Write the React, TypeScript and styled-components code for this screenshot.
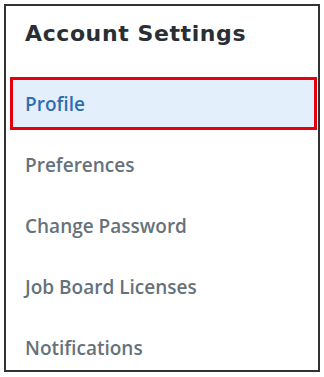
import React from "react";
import styled, { createGlobalStyle, css } from "styled-components";

const GlobalStyle = createGlobalStyle`
  html, body {
    margin: 0;
    padding: 0;
    background: #ffffff;
  }
`;

const Frame = styled.div`
  padding: 4px;
`;

const Panel = styled.aside`
  box-sizing: border-box;
  width: 316px;
  height: 368px;
  border: 2px solid #333333;
  background: #ffffff;
  overflow: hidden;
`;

const Title = styled.h2`
  box-sizing: border-box;
  height: 67px;
  margin: 0;
  padding: 15px 0 0 19px;
  font-family: "DejaVu Sans", "Open Sans", sans-serif;
  font-size: 22px;
  line-height: 26px;
  letter-spacing: 0.6px;
  font-weight: 700;
  color: #2a2f33;
`;

const NavList = styled.nav`
  display: flex;
  flex-direction: column;
  padding: 0 1px 0 4px;
`;

const NavItem = styled.a<{ active?: boolean }>`
  box-sizing: border-box;
  display: flex;
  align-items: center;
  height: 53px;
  margin: 4px 0;
  padding-left: 12px;
  border: 3px solid transparent;
  font-family: "Open Sans", "Noto Sans", sans-serif;
  font-size: 19px;
  font-weight: 600;
  color: #66727b;
  text-decoration: none;
  cursor: pointer;

  ${(props) =>
    props.active &&
    css`
      border-color: #e4000f;
      background: #e3f0fb;
      color: #2e6db4;
    `}
`;

const items = [
  "Profile",
  "Preferences",
  "Change Password",
  "Job Board Licenses",
  "Notifications",
];

const App = () => {
  return (
    <Frame>
      <GlobalStyle />
      <Panel>
        <Title>Account Settings</Title>
        <NavList>
          {items.map((item, i) => (
            <NavItem key={item} active={i === 0}>
              {item}
            </NavItem>
          ))}
        </NavList>
      </Panel>
    </Frame>
  );
};

export default App;
